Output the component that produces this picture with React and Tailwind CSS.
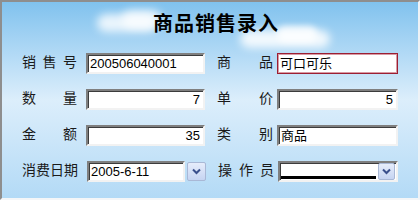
import React from 'react';

const cjk = {fontFamily: '"Noto Sans CJK SC", "Liberation Sans", sans-serif'};

const Label = ({chars}) => (
    <div className="w-[56px] pt-[1px] flex justify-between text-[14px] leading-none text-[#1a1a1a]" style={cjk}>
        {chars.map((c, i) => <span key={i}>{c}</span>)}
    </div>
);

const Field = ({value, align = 'left', width, red}) => (
    <div className={`h-[21px] bg-white flex items-center ${width} ${red ? 'border border-[#9c1f33] shadow-[inset_1px_1px_0_#d99aa3,inset_-1px_-1px_0_#d99aa3]' : 'border-2 border-t-[#7f7f7f] border-l-[#7f7f7f] border-b-[#f2f2f2] border-r-[#f2f2f2] shadow-[inset_1px_1px_0_#3c3c3c]'}`}>
        <span className={`w-full px-[2px] text-[13px] leading-none text-black ${align === 'right' ? 'text-right pr-[3px]' : ''}`} style={{fontFamily: '"Liberation Sans", "Noto Sans CJK SC", sans-serif'}}>{value}</span>
    </div>
);

const DropBtn = ({size = 'w-[17px] h-[17px]'}) => (
    <div className={`${size} flex items-center justify-center border border-[#a9b8d6] bg-gradient-to-b from-[#e6edfb] to-[#c6d4f2] rounded-[2px]`}>
        <svg width="9" height="7" viewBox="0 0 9 7"><path d="M1 1.5 L4.5 5 L8 1.5" fill="none" stroke="#3a4f8c" strokeWidth="2"/></svg>
    </div>
);

const Row = ({children}) => <div className="flex items-start h-[21px]">{children}</div>;

export default function App() {
    return (
        <div className="relative w-[420px] h-[200px] overflow-hidden border-t-2 border-l-2 border-t-[#8e8e8e] border-l-[#8e8e8e] border-b-2 border-r-2 border-b-[#f4f6f8] border-r-[#eef2f6] bg-gradient-to-b from-[#80c2ee] via-[#dceefb] to-[#b3daf6]">
            <div className="absolute left-[95px] top-[12px] w-[60px] h-[18px] rounded-full bg-white/80 blur-[4px]"/>
            <div className="absolute left-[120px] top-[8px] w-[40px] h-[18px] rounded-full bg-white/70 blur-[4px]"/>
            <div className="absolute left-[238px] top-[28px] w-[90px] h-[18px] rounded-full bg-white/85 blur-[4px]"/>
            <div className="absolute left-[275px] top-[24px] w-[40px] h-[16px] rounded-full bg-white/80 blur-[3px]"/>
            <div className="relative flex flex-col px-[20px]">
                <div className="h-[51px] flex justify-center pl-[12px] pt-[11px]">
                    <span className="text-[20px] font-bold leading-none tracking-[1px] text-black" style={cjk}>商品销售录入</span>
                </div>
                <div className="flex flex-col gap-[15px]">
                    <Row>
                        <Label chars={['销', '售', '号']}/>
                        <div className="ml-[9px]"><Field value="200506040001" width="w-[119px]"/></div>
                        <div className="ml-[12px]"><Label chars={['商', '品']}/></div>
                        <div className="ml-[4px]"><Field value="可口可乐" width="w-[121px]" red/></div>
                    </Row>
                    <Row>
                        <Label chars={['数', '量']}/>
                        <div className="ml-[9px]"><Field value="7" align="right" width="w-[119px]"/></div>
                        <div className="ml-[12px]"><Label chars={['单', '价']}/></div>
                        <div className="ml-[4px]"><Field value="5" align="right" width="w-[121px]"/></div>
                    </Row>
                    <Row>
                        <Label chars={['金', '额']}/>
                        <div className="ml-[9px]"><Field value="35" align="right" width="w-[119px]"/></div>
                        <div className="ml-[12px]"><Label chars={['类', '别']}/></div>
                        <div className="ml-[4px]"><Field value="商品" width="w-[121px]"/></div>
                    </Row>
                    <Row>
                        <Label chars={['消', '费', '日', '期']}/>
                        <div className="ml-[9px] w-[119px] flex items-center gap-[2px]">
                            <Field value="2005-6-11" width="w-[98px]"/>
                            <DropBtn size="w-[19px] h-[19px]"/>
                        </div>
                        <div className="ml-[12px]"><Label chars={['操', '作', '员']}/></div>
                        <div className="ml-[4px] w-[121px] h-[21px] bg-white flex items-center border-2 border-t-[#7f7f7f] border-l-[#7f7f7f] border-b-[#f2f2f2] border-r-[#f2f2f2] shadow-[inset_1px_1px_0_#3c3c3c] pl-[1px] pr-[1px]">
                            <div className="flex-1 h-full flex items-end pb-[1px]"><div className="w-full h-[3px] bg-black mr-[2px]"/></div>
                            <DropBtn/>
                        </div>
                    </Row>
                </div>
            </div>
        </div>
    );
}
